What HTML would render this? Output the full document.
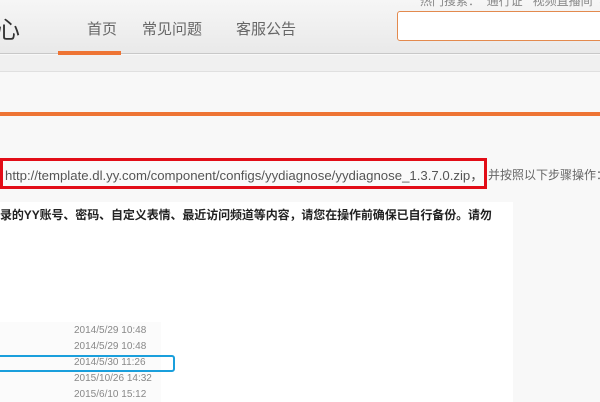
<!DOCTYPE html>
<html><head><meta charset="utf-8"><style>
*{margin:0;padding:0;box-sizing:border-box}
body{width:600px;height:400px;overflow:hidden;background:#f8f8f8;font-family:"Liberation Sans","Noto Sans CJK SC",sans-serif;position:relative}
.a{position:absolute}
</style></head><body>
<div class="a" style="left:0;top:0;width:600px;height:54px;background:linear-gradient(#f6f6f6,#e9e9e9);border-bottom:1px solid #c8c8c8"></div>
<div class="a" style="left:-4px;top:10px;font-size:24px;color:#333">心</div>
<div class="a" style="left:87px;top:18px;font-size:15px;color:#666">首页</div>
<div class="a" style="left:142px;top:18px;font-size:15px;color:#666">常见问题</div>
<div class="a" style="left:236px;top:18px;font-size:15px;color:#666">客服公告</div>
<div class="a" style="left:58px;top:51px;width:63px;height:4px;background:#ee7434"></div>
<div class="a" style="left:420px;top:-8px;font-size:12px;color:#888;white-space:nowrap">热门搜索：&nbsp;&nbsp;通行证&nbsp;&nbsp;&nbsp;视频直播间&nbsp;&nbsp;频道</div>
<div class="a" style="left:397px;top:11px;width:210px;height:30px;background:#fff;border:1px solid #e38a4e;border-radius:3px"></div>
<div class="a" style="left:0;top:55px;width:600px;height:17px;background:#f0f0f0;border-bottom:1px solid #e0e0e0"></div>
<div class="a" style="left:0;top:112px;width:600px;height:4px;background:#ee7434"></div>
<div class="a" style="left:0;top:158px;width:487px;height:31px;border:3.5px solid #e20d17;background:#fafafa"></div>
<div class="a" style="left:5px;top:165px;font-size:13.2px;color:#555;white-space:nowrap">http://template.dl.yy.com/component/configs/yydiagnose/yydiagnose_1.3.7.0.zip，</div>
<div class="a" style="left:488px;top:166px;font-size:12px;color:#666;white-space:nowrap">并按照以下步骤操作：</div>
<div class="a" style="left:0;top:202px;width:513px;height:200px;background:#fff"></div>
<div class="a" style="left:0;top:206px;font-size:12px;font-weight:bold;color:#222;white-space:nowrap;letter-spacing:-0.1px">录的YY账号、密码、自定义表情、最近访问频道等内容，请您在操作前确保已自行备份。请勿</div>
<div class="a" style="left:0;top:322px;width:161px;height:80px;background:#fbfbfb"></div>
<div class="a" style="left:74px;top:325px;font-size:10px;color:#888">2014/5/29 10:48</div>
<div class="a" style="left:74px;top:341px;font-size:10px;color:#888">2014/5/29 10:48</div>
<div class="a" style="left:74px;top:357px;font-size:10px;color:#888">2014/5/30 11:26</div>
<div class="a" style="left:74px;top:373px;font-size:10px;color:#888">2015/10/26 14:32</div>
<div class="a" style="left:74px;top:389px;font-size:10px;color:#888">2015/6/10 15:12</div>
<div class="a" style="left:-10px;top:355px;width:185px;height:17px;border:2.5px solid #1a9fdc;border-radius:3px"></div>
</body></html>
